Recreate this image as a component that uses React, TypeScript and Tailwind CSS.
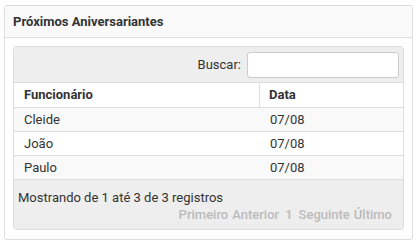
import React from 'react';

const rows = [
  { nome: 'Cleide', data: '07/08' },
  { nome: 'João', data: '07/08' },
  { nome: 'Paulo', data: '07/08' },
];

export default function App() {
  return (
    <div className="w-[418px] h-[244px] bg-white pl-[4px] pt-[5px] font-['Roboto',sans-serif] text-[#333]">
      <div className="w-[409px] h-[235px] border border-[#ddd] rounded-[3px] bg-white">
        <div className="h-[32px] flex items-center px-[8px] bg-[#fafafa] border-b border-[#ddd] rounded-t-[3px]">
          <span className="text-[13px] font-bold">Próximos Aniversariantes</span>
        </div>
        <div className="p-[8px]">
          <div className="border border-[#ddd] rounded-[3px] text-[13px]">
            <div className="h-[36px] bg-[#eee] flex items-center justify-end pr-[4px] border-b border-[#ddd]">
              <span className="mr-[6px]">Buscar:</span>
              <input className="w-[152px] h-[26px] bg-white border border-[#ccc] rounded-[3px] outline-none" />
            </div>
            <div className="grid grid-cols-[246px_1fr] h-[25px] border-b border-[#ddd] font-bold bg-white">
              <div className="flex items-center pl-[10px] border-r border-[#ddd]">Funcionário</div>
              <div className="flex items-center pl-[9px]">Data</div>
            </div>
            {rows.map((r, i) => (
              <div
                key={i}
                className={`grid grid-cols-[246px_1fr] h-[24px] border-b border-[#ddd] ${i % 2 === 0 ? 'bg-[#f9f9f9]' : 'bg-white'}`}
              >
                <div className="flex items-center pl-[10px]">{r.nome}</div>
                <div className="flex items-center pl-[10px]">{r.data}</div>
              </div>
            ))}
            <div className="h-[49px] bg-[#eee] px-[4px] pt-[10px] rounded-b-[3px]">
              <div className="leading-[16px]">Mostrando de 1 até 3 de 3 registros</div>
              <div className="flex justify-end gap-[4px] pr-[7px] text-[#bbb] font-medium leading-[18px]">
                <span>Primeiro</span>
                <span>Anterior</span>
                <span className="px-[2px]">1</span>
                <span>Seguinte</span>
                <span>Último</span>
              </div>
            </div>
          </div>
        </div>
      </div>
    </div>
  );
}
